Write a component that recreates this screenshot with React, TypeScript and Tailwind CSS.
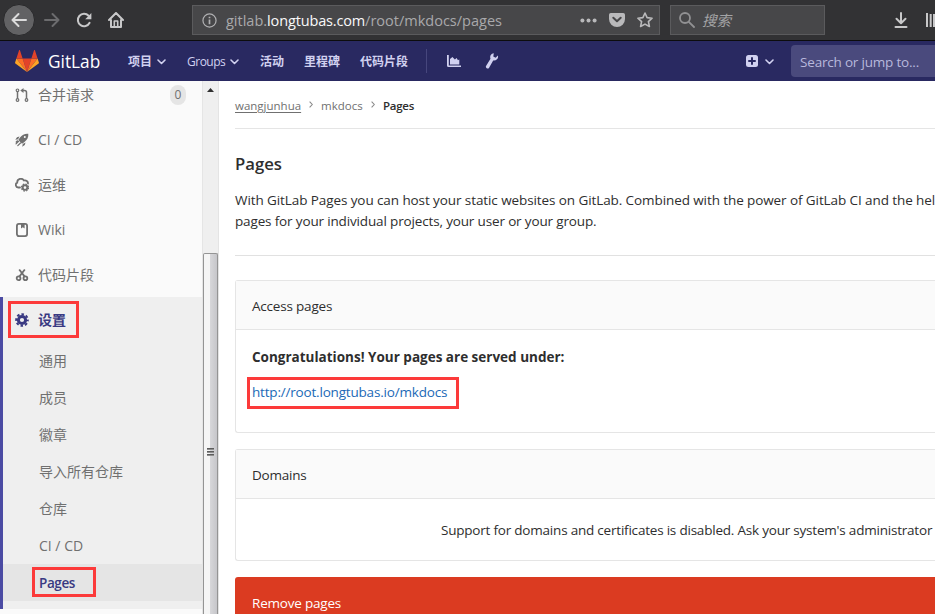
import type { ReactNode } from 'react';

const FONT = "font-['Open_Sans','Noto_Sans_CJK_SC',sans-serif]";

function Chevron({ className }: { className: string }) {
  return (
    <svg viewBox="0 0 9 6" className={className} fill="none" stroke="currentColor" strokeWidth="1.6" strokeLinecap="round" strokeLinejoin="round">
      <path d="M1 1l3.5 3.5L8 1" />
    </svg>
  );
}

function BrowserBar() {
  return (
    <div className="flex h-[41px] shrink-0 items-center border-b border-[#0c0c0d] bg-[#323234] text-[#c8c8c9]">
      <div className="ml-[3px] flex size-8 shrink-0 items-center justify-center rounded-full border border-[#29292b] bg-[#626264]">
        <svg viewBox="0 0 16 16" className="size-4" fill="none" stroke="#dcdcdc" strokeWidth="2" strokeLinecap="round" strokeLinejoin="round">
          <path d="M15 8H1.5M7.5 2l-6 6 6 6" />
        </svg>
      </div>
      <svg viewBox="0 0 16 16" className="ml-[9px] size-4 shrink-0" fill="none" stroke="#6c6c6e" strokeWidth="2" strokeLinecap="round" strokeLinejoin="round">
        <path d="M1 8h13.5M8.5 2l6 6-6 6" />
      </svg>
      <svg viewBox="0 0 16 16" className="ml-4 size-4 shrink-0" fill="none" stroke="currentColor" strokeWidth="2">
        <path d="M13.6 10.8A6.2 6.2 0 1 1 12.6 3.8" strokeLinecap="round" />
        <path d="M15.4 1v6.2H9.2z" fill="currentColor" stroke="none" />
      </svg>
      <svg viewBox="0 0 16 16" className="ml-4 size-4 shrink-0" fill="none" stroke="currentColor" strokeWidth="2" strokeLinecap="round" strokeLinejoin="round">
        <path d="M1 8l7-7 7 7M3 8v7h10V8" />
        <path d="M6.3 14V9h3.4v5" strokeWidth="1.6" />
      </svg>
      <div className="ml-[68px] flex h-[30px] w-[468px] shrink-0 items-center border border-[#5b5b5d] bg-[#474749] pl-[9px]">
        <svg viewBox="0 0 16 16" className="size-[15px] shrink-0" fill="none" stroke="#b1b1b3" strokeWidth="1.3">
          <circle cx="8" cy="8" r="7" />
          <path d="M8 7v5M8 4v1.7" strokeWidth="1.8" />
        </svg>
        <div className="ml-[9px] flex w-[354px] shrink-0 pt-px whitespace-nowrap text-[14.5px] leading-5 text-[#a9a9ab]">
          <span>gitlab.</span>
          <span className="tracking-[-0.15px] text-[#f9f9fa]">longtubas.com</span>
          <span>/root/mkdocs/pages</span>
        </div>
        <svg viewBox="0 0 17 5" className="h-[5px] w-[17px] shrink-0" fill="#b9b9bb">
          <circle cx="2.4" cy="2.5" r="2" />
          <circle cx="8.5" cy="2.5" r="2" />
          <circle cx="14.6" cy="2.5" r="2" />
        </svg>
        <svg viewBox="0 0 16 14" className="ml-3 h-[14px] w-4 shrink-0">
          <path d="M1.8 0h12.4A1.8 1.8 0 0 1 16 1.8V6a8 8 0 0 1-16 0V1.800A1.800 1.800 0 0 1 1.800 0z" fill="#b9b9bb" />
          <path d="M4.300 4.800L8 8.300l3.700-3.500" fill="none" stroke="#474749" strokeWidth="2" strokeLinecap="round" strokeLinejoin="round" />
        </svg>
        <svg viewBox="0 0 16 16" className="ml-3 size-4 shrink-0" fill="none" stroke="#b9b9bb" strokeWidth="1.6" strokeLinejoin="round">
          <path d="M8 1l2.100 4.600 5 .6-3.700 3.400 1 4.900L8 12.100l-4.400 2.400 1-4.900L.9 6.200l5-.6z" />
        </svg>
      </div>
      <div className="ml-[10px] flex h-[30px] w-[155px] shrink-0 items-center border border-[#5b5b5d] bg-[#474749] pl-2">
        <svg viewBox="0 0 16 16" className="size-4 shrink-0" fill="none" stroke="#919193" strokeWidth="1.800" strokeLinecap="round">
          <circle cx="6" cy="6" r="5" />
          <path d="M9.800 9.800L15 15" />
        </svg>
        <span className="ml-[7px] pt-px text-[14.5px] italic leading-5 text-[#a3a3a5]">搜索</span>
      </div>
      <svg viewBox="0 0 14 16" className="ml-[69px] h-4 w-[14px] shrink-0" fill="none" stroke="currentColor" strokeWidth="2" strokeLinecap="round" strokeLinejoin="round">
        <path d="M7 1v10M2.500 6.800L7 11.200l4.500-4.400M1.500 15h11" />
      </svg>
      <svg viewBox="0 0 16 14" className="ml-[18px] h-[14px] w-4 shrink-0" fill="currentColor">
        <path d="M0 0h2v14H0zM3.700 1h2v13h-2zM7 1h2v13H7z" />
      </svg>
    </div>
  );
}

function GitLabLogo() {
  return (
    <svg viewBox="0 0 24 22" className="h-[22px] w-6 shrink-0">
      <path d="M12 22l4.400-13.500H7.600z" fill="#e24329" />
      <path d="M12 22L7.600 8.500H1.400z" fill="#fc6d26" />
      <path d="M1.400 8.500L.1 12.600a.9.9 0 0 0 .3 1L12 22z" fill="#fca326" />
      <path d="M1.400 8.500h6.200L4.950.3a.46.46 0 0 0-.88 0z" fill="#e24329" />
      <path d="M12 22l4.400-13.500h6.200z" fill="#fc6d26" />
      <path d="M22.600 8.500l1.300 4.100a.9.9 0 0 1-.3 1L12 22z" fill="#fca326" />
      <path d="M22.600 8.500h-6.200L19.050.3a.46.46 0 0 1 .88 0z" fill="#e24329" />
    </svg>
  );
}

function NavBar() {
  return (
    <div className="flex h-10 shrink-0 items-center bg-[#292961] pl-[15px] text-[12px] font-medium leading-5 whitespace-nowrap text-[#d1d1f0]">
      <GitLabLogo />
      <span className="ml-[9px] w-[53px] shrink-0 pt-px text-[17.3px] font-normal text-white">GitLab</span>
      <div className="ml-[27px] flex shrink-0 items-center pt-[2px]">
        <span className="font-bold">项目</span>
        <Chevron className="ml-[5px] h-[6px] w-[9px]" />
      </div>
      <div className="ml-[21px] flex shrink-0 items-center pt-[2px]">
        <span className="w-[38px] tracking-[-0.5px]">Groups</span>
        <Chevron className="ml-[5px] h-[6px] w-[9px]" />
      </div>
      <span className="ml-[21px] shrink-0 pt-[2px] font-bold">活动</span>
      <span className="ml-[20px] shrink-0 pt-[2px] font-bold">里程碑</span>
      <span className="ml-[20px] shrink-0 pt-[2px] font-bold">代码片段</span>
      <div className="ml-[18px] h-6 w-px shrink-0 bg-[#46467d]" />
      <svg viewBox="0 0 14 14" className="ml-5 size-[14px] shrink-0" fill="currentColor">
        <path d="M0 1h1.800v10.400H14V13H1.500A1.500 1.500 0 0 1 0 11.500z" />
        <path d="M3 10.400V5l2.400-2 2.500 2.500L9.600 4l1.400 2.200 1.300-.7v4.900z" />
      </svg>
      <svg viewBox="0 0 14 16" className="ml-6 h-4 w-[14px] shrink-0" fill="currentColor">
        <path d="M8.800.2a4 4 0 0 0-3.300 5.500L1.200 12.800a1.700 1.700 0 0 0 2.900 1.900l4.100-7.200a4 4 0 0 0 4.700-5l-2.300 2.200-2.300-1.300z" />
      </svg>
      <svg viewBox="0 0 12 12" className="ml-[247px] size-3 shrink-0">
        <rect width="12" height="12" rx="2.500" fill="currentColor" />
        <path d="M6 3v6M3 6h6" stroke="#292961" strokeWidth="2" strokeLinecap="round" />
      </svg>
      <Chevron className="mt-[2px] ml-[7px] h-[6px] w-[9px] shrink-0" />
      <div className="ml-[17px] flex h-8 w-[200px] shrink-0 items-center rounded bg-[#4a4a7d] pt-[2px] pl-[9px] text-[13.5px] font-normal tracking-[-0.2px] text-[#b8b8dc]">
        Search or jump to...
      </div>
    </div>
  );
}

const icons: Record<string, ReactNode> = {
  merge: (
    <svg viewBox="0 0 14 14" className="size-[14px]" fill="none" stroke="currentColor" strokeWidth="1.500">
      <circle cx="2.500" cy="2.300" r="1.300" strokeWidth="1.200" />
      <circle cx="2.500" cy="12" r="1.300" strokeWidth="1.200" />
      <circle cx="11.500" cy="12" r="1.300" strokeWidth="1.200" />
      <path d="M2.500 3.500v7M11.500 10.700V4.500a2 2 0 0 0-2-2H7" />
      <path d="M8.500 0v5L5.300 2.500z" fill="currentColor" stroke="none" />
    </svg>
  ),
  rocket: (
    <svg viewBox="0 0 14 14" className="size-[14px]" fill="currentColor">
      <path fillRule="evenodd" d="M13.300.7C10 .3 7 1.900 5 4.500L3.300 7l3.700 3.700 2.500-1.700c2.600-2 4.200-5 3.800-8.300zM9.800 3.100a1 1 0 1 1 0 2 1 1 0 0 1 0-2z" />
      <path d="M4.500 3.500L2 4.200.3 6.800l2.800-.6zM10.500 9.500L9.800 12l-2.600 1.700.6-2.800z" />
      <path d="M3.600 8.300L1 10.900M5.500 10l-2.700 2.700M2.500 7.800L1.200 9" stroke="currentColor" strokeWidth="1.200" strokeLinecap="round" />
    </svg>
  ),
  ops: (
    <svg viewBox="0 0 14 14" className="size-[14px]" fill="none" stroke="currentColor">
      <path d="M5 9.500H3.300A2.600 2.600 0 0 1 2.200 4.600 3.700 3.700 0 0 1 9 2.500a3 3 0 0 1 4 3" strokeWidth="1.800" strokeLinecap="round" />
      <circle cx="10" cy="9.600" r="2.300" strokeWidth="1.900" />
      <circle cx="10" cy="9.600" r="3.500" strokeWidth="1.300" strokeDasharray="1.570 1.180" />
    </svg>
  ),
  wiki: (
    <svg viewBox="0 0 14 14" className="size-[14px]" fill="none" stroke="currentColor" strokeWidth="1.800">
      <rect x="1.900" y=".9" width="10.200" height="12.200" rx="2" />
      <path d="M6 1h3.600v4.600L7.800 4.300 6 5.600z" fill="currentColor" stroke="none" />
    </svg>
  ),
  snippets: (
    <svg viewBox="0 0 14 14" className="size-[14px]" fill="none" stroke="currentColor" strokeWidth="1.800">
      <circle cx="3.600" cy="10.300" r="1.900" />
      <circle cx="10.400" cy="10.300" r="1.900" />
      <path d="M4.300 8.600L9.800 1.500M9.700 8.600L4.200 1.500" />
    </svg>
  ),
  settings: (
    <svg viewBox="0 0 14 14" className="size-[14px]" fill="none" stroke="currentColor">
      <circle cx="7" cy="7" r="3.600" strokeWidth="3" />
      <circle cx="7" cy="7" r="5.800" strokeWidth="2" strokeDasharray="2.550 2.005" strokeDashoffset="1.275" />
    </svg>
  ),
};

const topItems = [
  { icon: 'merge', label: '合并请求', count: '0' },
  { icon: 'rocket', label: 'CI / CD' },
  { icon: 'ops', label: '运维' },
  { icon: 'wiki', label: 'Wiki' },
  { icon: 'snippets', label: '代码片段' },
];

const subItems = ['通用', '成员', '徽章', '导入所有仓库', '仓库', 'CI / CD'];

function Sidebar() {
  return (
    <div className="w-[203px] shrink-0 border-r border-[#e5e5e5] bg-[#fafafa] text-[14px] leading-5 text-[#707070]">
      <div className="-mt-[9px]">
        {topItems.map((item) => (
          <div key={item.label} className="flex h-[45px] items-center pl-[15px]">
            {icons[item.icon]}
            <span className="ml-[9px]">{item.label}</span>
            {item.count && (
              <span className="mr-4 ml-auto flex h-5 w-4 items-center justify-center rounded-full bg-[#e5e5e5] pt-px text-[12px]">{item.count}</span>
            )}
          </div>
        ))}
      </div>
      <div className="h-[312px] border-l-[3px] border-[#4b4ba3] bg-[#efefef]">
        <div className="relative flex h-[45px] items-center pl-3 font-bold text-[#393982]">
          {icons.settings}
          <span className="ml-[9px]">设置</span>
          <div className="absolute top-1 left-[5px] h-[37px] w-[71px] border-[3px] border-[#fc3a3a]" />
        </div>
        {subItems.map((label) => (
          <div key={label} className="flex h-[37px] items-center pl-9">
            {label}
          </div>
        ))}
        <div className="relative flex h-[37px] items-center bg-[#e5e5e5] pl-9 pt-px text-[13.5px] font-semibold tracking-[-0.4px] text-[#393982]">
          Pages
          <div className="absolute top-[3px] left-[29px] h-[30px] w-16 border-[3px] border-[#fc3a3a]" />
        </div>
      </div>
    </div>
  );
}

function ScrollBar() {
  return (
    <div className="flex w-4 shrink-0 flex-col border-r border-[#e4e4e4] bg-[#efefef]">
      <svg viewBox="0 0 7 4" className="mt-[7px] ml-[4px] h-1 w-[7px] shrink-0">
        <path d="M3.500 0L7 4H0z" fill="#303030" />
      </svg>
      <div className="mt-[161px] flex w-[15px] flex-1 flex-col items-center rounded-t-[2px] border border-b-0 border-[#949494] bg-linear-to-r from-[#f5f5f5] from-45% via-[#d6d6d9] via-50% to-[#c6c6ca]">
        <div className="mt-[194px] flex flex-col gap-px">
          <div className="h-[2px] w-[7px] bg-linear-to-b from-[#444] to-[#aaa]" />
          <div className="h-[2px] w-[7px] bg-linear-to-b from-[#444] to-[#aaa]" />
          <div className="h-[2px] w-[7px] bg-linear-to-b from-[#444] to-[#aaa]" />
        </div>
      </div>
    </div>
  );
}

function Crumb() {
  return (
    <svg viewBox="0 0 4 7" className="mt-[-2px] h-[7px] w-1" fill="none" stroke="#8a8a8a" strokeWidth="1.100">
      <path d="M.6.600l2.700 2.900L.6 6.400" />
    </svg>
  );
}

function Content() {
  return (
    <div className="w-[716px] shrink-0 bg-white pl-4 text-[13.5px] leading-[21px] whitespace-nowrap text-[#2e2e2e]">
      <div className="flex h-12 items-center border-b border-[#e5e5e5] pt-[2px] text-[11.5px] text-[#707070]">
        <span className="w-[66px] underline underline-offset-2">wangjunhua</span>
        <div className="ml-[8px]"><Crumb /></div>
        <span className="ml-[8px] w-[42px]">mkdocs</span>
        <div className="ml-[8px]"><Crumb /></div>
        <span className="ml-[8px] font-semibold tracking-[-0.25px] text-[#2e2e2e]">Pages</span>
      </div>
      <h4 className="mt-[24px] text-[16.7px] leading-[22px] font-semibold">Pages</h4>
      <p className="mt-[15px]">
        <span className="block tracking-[-0.09px]">With GitLab Pages you can host your static websites on GitLab. Combined with the power of GitLab CI and the hel</span>
        <span className="block tracking-[-0.15px]">pages for your individual projects, your user or your group.</span>
      </p>
      <hr className="mt-[23px] border-[#e1e1e1]" />
      <div className="mt-6 h-[153px] rounded-l-[3px] border border-r-0 border-[#e5e5e5]">
        <div className="flex h-[49px] items-center border-b border-[#e5e5e5] bg-[#fafafa] pt-[2px] pl-4 tracking-[-0.2px]">Access pages</div>
        <p className="mt-[17px] pl-4 font-bold">Congratulations! Your pages are served under:</p>
        <div className="relative mt-[14px] pl-4 tracking-[-0.19px] text-[#1b69b6]">
          http://root.longtubas.io/mkdocs
          <div className="absolute -top-[5px] left-[11px] h-8 w-[212px] border-[3px] border-[#fc3a3a]" />
        </div>
      </div>
      <div className="mt-4 h-[112px] rounded-l-[3px] border border-r-0 border-[#e5e5e5]">
        <div className="flex h-[49px] items-center border-b border-[#e5e5e5] bg-[#fafafa] pt-[2px] pl-4 tracking-[-0.22px]">Domains</div>
        <p className="mt-[21px] pl-[205px] tracking-[-0.21px]">Support for domains and certificates is disabled. Ask your system's administrator</p>
      </div>
      <div className="mt-4 h-[60px] rounded-tl-[3px] bg-[#db3b21] pt-[16px] pl-[17px] tracking-[-0.2px] text-white">Remove pages</div>
    </div>
  );
}

export default function App() {
  return (
    <div className={`${FONT} flex h-[614px] w-[935px] flex-col overflow-hidden bg-white`}>
      <BrowserBar />
      <NavBar />
      <div className="flex min-h-0 flex-1 overflow-hidden">
        <Sidebar />
        <ScrollBar />
        <Content />
      </div>
    </div>
  );
}
